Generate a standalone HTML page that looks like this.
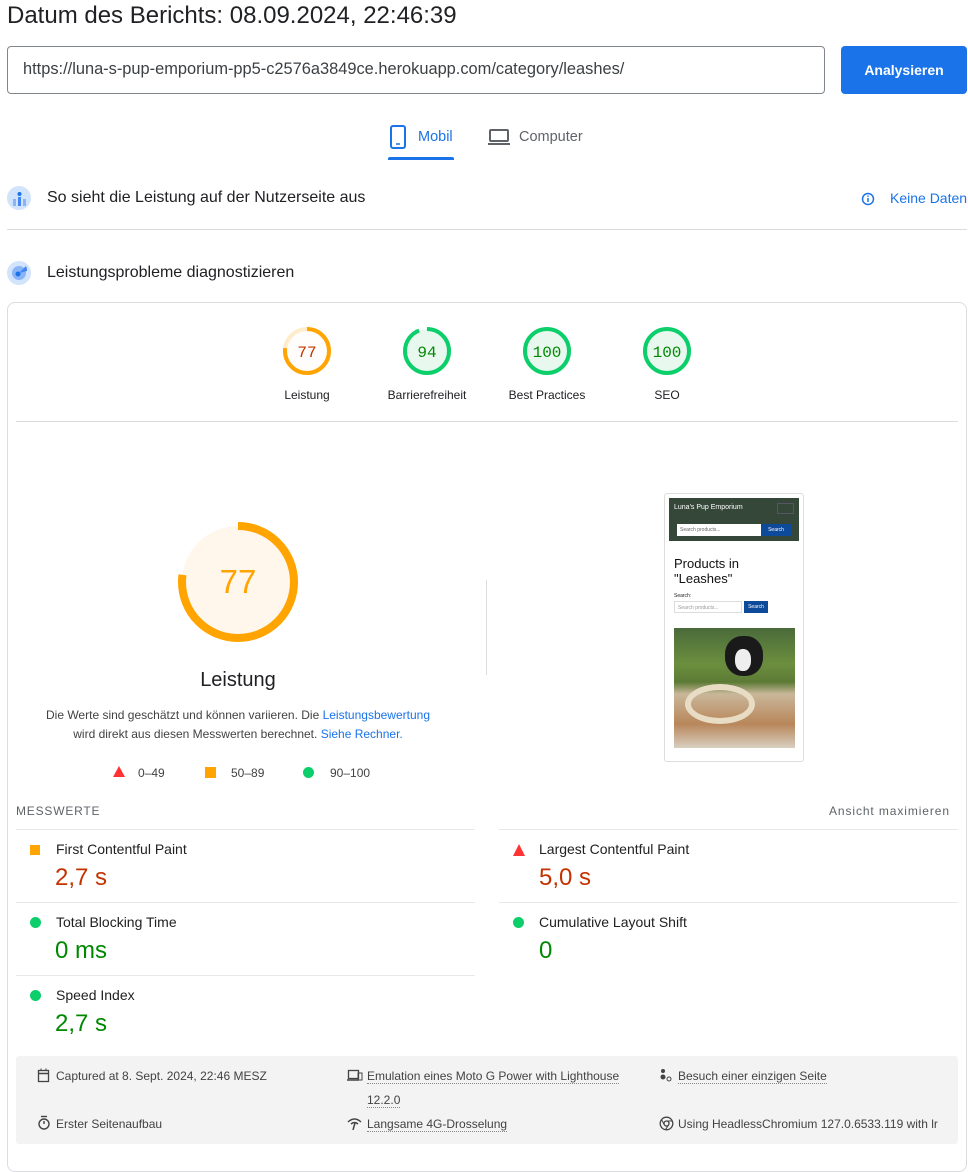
<!DOCTYPE html>
<html><head><meta charset="utf-8"><style>
*{box-sizing:border-box;margin:0;padding:0}
body{width:968px;height:1155px;overflow:hidden;background:#fff;font-family:"Liberation Sans",Roboto,sans-serif;color:#202124;position:relative}
.a{position:absolute;white-space:nowrap}
.hr{position:absolute;height:1px;background:#dadce0}
.g text{font-family:"Liberation Mono",monospace}
.mt{font-size:14px;color:#212121}
.mv{font-size:24px}
.ft{font-size:12px;color:#424242}
.u{border-bottom:1px dotted #888}
</style></head><body>
<div class="a" style="left:7px;top:2px;font-size:24px;color:#202124">Datum des Berichts: 08.09.2024, 22:46:39</div>
<div class="a" style="left:7px;top:46px;width:818px;height:48px;border:1px solid #80868b;border-radius:4px;padding:13px 15px;font-size:16.4px;color:#3c4043">https://luna-s-pup-emporium-pp5-c2576a3849ce.herokuapp.com/category/leashes/</div>
<div class="a" style="left:841px;top:46px;width:126px;height:48px;background:#1a73e8;border-radius:4px;color:#fff;font-weight:bold;font-size:14px;text-align:center;line-height:48px">Analysieren</div>
<svg class="a" style="left:389px;top:125px" width="18" height="24" viewBox="0 0 18 24"><rect x="2" y="1" width="14" height="22" rx="2" fill="none" stroke="#1a73e8" stroke-width="2"/><line x1="7" y1="19" x2="11" y2="19" stroke="#1a73e8" stroke-width="1.5"/></svg>
<div class="a" style="left:418px;top:129px;font-size:14.5px;color:#1a73e8">Mobil</div>
<div class="a" style="left:388px;top:157px;width:66px;height:3px;background:#1a73e8;border-radius:2px 2px 0 0"></div>
<svg class="a" style="left:487px;top:128px" width="24" height="18" viewBox="0 0 24 18"><rect x="3" y="2" width="18" height="11" rx="1" fill="none" stroke="#5f6368" stroke-width="2"/><line x1="1" y1="16" x2="23" y2="16" stroke="#5f6368" stroke-width="2"/></svg>
<div class="a" style="left:519px;top:129px;font-size:14.5px;color:#5f6368">Computer</div>

<svg class="a" style="left:6px;top:185px" width="26" height="26" viewBox="0 0 26 26"><circle cx="13" cy="13" r="12" fill="#d2e3fc"/><rect x="7" y="14" width="3" height="7" fill="#8ab4f8"/><rect x="12" y="12" width="3" height="9" fill="#4285f4"/><rect x="17" y="14" width="3" height="7" fill="#8ab4f8"/><circle cx="13.5" cy="9" r="2" fill="#1a73e8"/></svg>
<div class="a" style="left:47px;top:189px;font-size:16px">So sieht die Leistung auf der Nutzerseite aus</div>
<svg class="a" style="left:861px;top:192px" width="14" height="14" viewBox="0 0 14 14"><circle cx="7" cy="7" r="5.5" fill="none" stroke="#1a73e8" stroke-width="1.5"/><line x1="7" y1="6" x2="7" y2="10" stroke="#1a73e8" stroke-width="1.5"/><circle cx="7" cy="4.2" r=".8" fill="#1a73e8"/></svg>
<div class="a" style="left:890px;top:190px;font-size:14px;color:#1a73e8">Keine Daten</div>
<div class="hr" style="left:7px;top:229px;width:960px"></div>
<svg class="a" style="left:6px;top:260px" width="26" height="26" viewBox="0 0 26 26"><circle cx="13" cy="13" r="12" fill="#d2e3fc"/><circle cx="13" cy="13" r="7" fill="#8ab4f8"/><path d="M13 13 L20 6 A9 9 0 0 1 21 11 Z" fill="#4285f4"/><circle cx="12" cy="14" r="2.5" fill="#1a73e8"/></svg>
<div class="a" style="left:47px;top:264px;font-size:16px">Leistungsprobleme diagnostizieren</div>

<div class="a" style="left:7px;top:302px;width:960px;height:870px;border:1px solid #dadce0;border-radius:8px"></div>

<svg class="a g" style="left:280px;top:324px" width="420" height="56">
<g transform="translate(27,27)"><circle r="22" fill="#fff6ec" stroke="#ffa400" stroke-width="4" opacity=".2"/><circle r="22" fill="none" stroke="#ffa400" stroke-width="4" stroke-dasharray="106.4 138.2" transform="rotate(-90)"/><text y="6" text-anchor="middle" font-size="16" fill="#c33300">77</text></g>
<g transform="translate(147,27)"><circle r="22" fill="#e8f8ef" stroke="#0cce6b" stroke-width="4" stroke-dasharray="129.9 138.2" transform="rotate(-90)"/><text y="6" text-anchor="middle" font-size="16" fill="#008800">94</text></g>
<g transform="translate(267,27)"><circle r="22" fill="#e8f8ef" stroke="#0cce6b" stroke-width="4"/><text y="6" text-anchor="middle" font-size="16" fill="#008800">100</text></g>
<g transform="translate(387,27)"><circle r="22" fill="#e8f8ef" stroke="#0cce6b" stroke-width="4"/><text y="6" text-anchor="middle" font-size="16" fill="#008800">100</text></g>
</svg>
<div class="a" style="left:247px;width:120px;text-align:center;top:388px;font-size:12px">Leistung</div>
<div class="a" style="left:367px;width:120px;text-align:center;top:388px;font-size:12px">Barrierefreiheit</div>
<div class="a" style="left:487px;width:120px;text-align:center;top:388px;font-size:12px">Best Practices</div>
<div class="a" style="left:607px;width:120px;text-align:center;top:388px;font-size:12px">SEO</div>
<div class="hr" style="left:16px;top:421px;width:942px"></div>

<svg class="a" style="left:176px;top:520px" width="124" height="124"><circle cx="62" cy="62" r="56" fill="#fff6ec"/><circle cx="62" cy="62" r="56" fill="none" stroke="#ffa400" stroke-width="8" stroke-dasharray="270.9 351.9" transform="rotate(-90 62 62)"/><text x="62" y="73" text-anchor="middle" font-size="33" fill="#ffa400" font-family="Liberation Sans">77</text></svg>
<div class="a" style="left:138px;width:200px;text-align:center;top:669px;font-size:20px">Leistung</div>
<div class="a" style="left:38px;width:400px;text-align:center;top:706px;font-size:12px;line-height:19px;color:#424242;white-space:normal">Die Werte sind geschätzt und können variieren. Die <span style="color:#1a73e8">Leistungsbewertung</span><br>wird direkt aus diesen Messwerten berechnet. <span style="color:#1a73e8">Siehe Rechner.</span></div>
<svg class="a" style="left:112px;top:766px" width="14" height="12"><polygon points="7,0 13,11 1,11" fill="#ff3333"/></svg>
<div class="a" style="left:138px;top:766px;font-size:12px;color:#424242">0–49</div>
<div class="a" style="left:205px;top:767px;width:11px;height:11px;background:#ffa400"></div>
<div class="a" style="left:231px;top:766px;font-size:12px;color:#424242">50–89</div>
<div class="a" style="left:303px;top:767px;width:11px;height:11px;border-radius:50%;background:#0cce6b"></div>
<div class="a" style="left:330px;top:766px;font-size:12px;color:#424242">90–100</div>
<div class="a" style="left:486px;top:580px;width:1px;height:95px;background:#dadce0"></div>

<div class="a" style="left:664px;top:493px;width:140px;height:269px;border:1px solid #ddd;border-radius:3px;overflow:hidden;background:#fff">
<div class="a" style="left:4px;top:4px;width:130px;height:43px;background:#354739"></div>
<div class="a" style="left:9px;top:10px;font-size:7px;color:#fff">Luna's Pup Emporium</div>
<div class="a" style="left:112px;top:9px;width:17px;height:11px;border:1px solid #556"></div>
<div class="a" style="left:12px;top:30px;width:84px;height:12px;background:#fff;font-size:5px;color:#666;padding:3px">Search products...</div>
<div class="a" style="left:96px;top:30px;width:30px;height:12px;background:#0d4a9a;font-size:5px;color:#fff;text-align:center;line-height:12px">Search</div>
<div class="a" style="left:9px;top:62px;font-size:13px;line-height:15px;color:#111">Products in<br>"Leashes"</div>
<div class="a" style="left:9px;top:99px;font-size:5px">Search:</div>
<div class="a" style="left:9px;top:107px;width:68px;height:12px;border:1px solid #ddd;font-size:5px;color:#999;padding:3px">Search products...</div>
<div class="a" style="left:79px;top:107px;width:24px;height:12px;background:#0d4a9a;font-size:5px;color:#fff;text-align:center;line-height:12px">Search</div>
<div class="a" style="left:9px;top:134px;width:121px;height:120px;background:linear-gradient(#4a6a3a 0,#6b8f3e 30%,#5c7a35 45%,#c9b79a 55%,#b8865a 80%,#d8d0c0 100%)"></div>
<div class="a" style="left:60px;top:142px;width:38px;height:40px;border-radius:45%;background:#1a1a1a"></div>
<div class="a" style="left:70px;top:155px;width:16px;height:22px;border-radius:45%;background:#eee"></div>
<div class="a" style="left:20px;top:190px;width:70px;height:40px;border-radius:50%;border:6px solid #e8dcc4"></div>
</div>

<div class="a" style="left:16px;top:804px;font-size:12px;letter-spacing:.8px;color:#5f6368">MESSWERTE</div>
<div class="a" style="left:829px;top:804px;font-size:12px;letter-spacing:.9px;color:#5f6368">Ansicht maximieren</div>
<div class="hr" style="left:16px;top:829px;width:459px;background:#e8e8e8"></div>
<div class="hr" style="left:499px;top:829px;width:459px;background:#e8e8e8"></div>
<div class="hr" style="left:16px;top:902px;width:459px;background:#e8e8e8"></div>
<div class="hr" style="left:499px;top:902px;width:459px;background:#e8e8e8"></div>
<div class="hr" style="left:16px;top:975px;width:459px;background:#e8e8e8"></div>

<div class="a" style="left:30px;top:845px;width:10px;height:10px;background:#ffa400"></div>
<div class="a mt" style="left:56px;top:841px">First Contentful Paint</div>
<div class="a mv" style="left:55px;top:864px;color:#c33300">2,7 s</div>
<svg class="a" style="left:512px;top:844px" width="14" height="12"><polygon points="7,0 13,12 1,12" fill="#ff3333"/></svg>
<div class="a mt" style="left:539px;top:841px">Largest Contentful Paint</div>
<div class="a mv" style="left:539px;top:864px;color:#c33300">5,0 s</div>

<div class="a" style="left:30px;top:917px;width:11px;height:11px;border-radius:50%;background:#0cce6b"></div>
<div class="a mt" style="left:56px;top:914px">Total Blocking Time</div>
<div class="a mv" style="left:55px;top:937px;color:#008800">0 ms</div>
<div class="a" style="left:513px;top:917px;width:11px;height:11px;border-radius:50%;background:#0cce6b"></div>
<div class="a mt" style="left:539px;top:914px">Cumulative Layout Shift</div>
<div class="a mv" style="left:539px;top:937px;color:#008800">0</div>

<div class="a" style="left:30px;top:990px;width:11px;height:11px;border-radius:50%;background:#0cce6b"></div>
<div class="a mt" style="left:56px;top:987px">Speed Index</div>
<div class="a mv" style="left:55px;top:1010px;color:#008800">2,7 s</div>

<div class="a" style="left:16px;top:1056px;width:942px;height:88px;background:#f3f3f3;border-radius:3px"></div>
<svg class="a" style="left:37px;top:1068px" width="13" height="15"><rect x="1.5" y="2.5" width="10" height="11" fill="none" stroke="#444" stroke-width="1.3"/><line x1="1.5" y1="5.5" x2="11.5" y2="5.5" stroke="#444" stroke-width="1.5"/><line x1="4" y1="0.5" x2="4" y2="3" stroke="#444"/><line x1="9" y1="0.5" x2="9" y2="3" stroke="#444"/></svg>
<div class="a ft" style="left:56px;top:1069px">Captured at 8. Sept. 2024, 22:46 MESZ</div>
<svg class="a" style="left:347px;top:1069px" width="16" height="13"><rect x="1.5" y="1.5" width="10" height="8" fill="none" stroke="#444" stroke-width="1.3"/><line x1="0" y1="11" x2="12" y2="11" stroke="#444" stroke-width="1.5"/><rect x="11" y="4" width="4" height="7" fill="none" stroke="#444"/></svg>
<div class="a ft" style="left:367px;top:1069px"><span class="u">Emulation eines Moto G Power with Lighthouse</span></div>
<div class="a ft" style="left:367px;top:1093px"><span class="u">12.2.0</span></div>
<svg class="a" style="left:659px;top:1068px" width="13" height="15"><circle cx="4" cy="3" r="2" fill="#444"/><circle cx="4" cy="9" r="2.5" fill="#444"/><circle cx="10" cy="11" r="2" fill="none" stroke="#444"/></svg>
<div class="a ft" style="left:678px;top:1069px"><span class="u">Besuch einer einzigen Seite</span></div>
<svg class="a" style="left:37px;top:1115px" width="14" height="16"><circle cx="7" cy="9" r="5" fill="none" stroke="#444" stroke-width="1.4"/><line x1="4" y1="1.5" x2="10" y2="1.5" stroke="#444" stroke-width="1.4"/><line x1="7" y1="9" x2="7" y2="6" stroke="#444" stroke-width="1.4"/></svg>
<div class="a ft" style="left:56px;top:1117px">Erster Seitenaufbau</div>
<svg class="a" style="left:347px;top:1117px" width="15" height="13"><path d="M1 5 Q7.5 -1 14 5" fill="none" stroke="#444" stroke-width="1.5"/><path d="M4 7 Q7.5 4 11 7" fill="none" stroke="#444" stroke-width="1.5"/><line x1="8" y1="6" x2="6" y2="13" stroke="#444" stroke-width="1.5"/></svg>
<div class="a ft" style="left:367px;top:1117px"><span class="u">Langsame 4G-Drosselung</span></div>
<svg class="a" style="left:659px;top:1116px" width="15" height="15"><circle cx="7.5" cy="7.5" r="6.3" fill="none" stroke="#444" stroke-width="1.3"/><circle cx="7.5" cy="7.5" r="2.5" fill="none" stroke="#444" stroke-width="1.3"/><line x1="7.5" y1="5" x2="13" y2="5" stroke="#444"/><line x1="5.3" y1="8.8" x2="2.5" y2="3.5" stroke="#444"/><line x1="9.6" y1="8.8" x2="6.5" y2="13.7" stroke="#444"/></svg>
<div class="a ft" style="left:678px;top:1117px;width:262px;overflow:hidden"><span class="u">Using HeadlessChromium 127.0.6533.119 with lr</span></div>
</body></html>
